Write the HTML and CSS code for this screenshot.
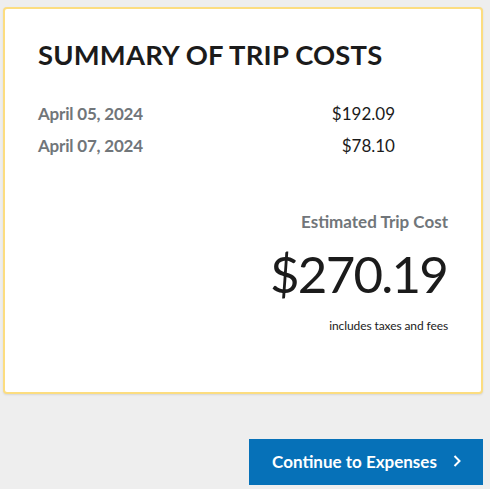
FILE: index.html
```html
<!DOCTYPE html>
<html>
<head>
<meta charset="utf-8">
<link rel="stylesheet" href="styles.css">
</head>
<body>
<div class="page">
  <section class="card">
    <h1 class="title">SUMMARY OF TRIP COSTS</h1>
    <div class="rows">
      <div class="row"><span class="date">April 05, 2024</span><span class="amt">$192.09</span></div>
      <div class="row"><span class="date">April 07, 2024</span><span class="amt">$78.10</span></div>
    </div>
    <div class="total">
      <div class="total-label">Estimated Trip Cost</div>
      <div class="total-value">$270.19</div>
      <div class="total-note">includes taxes and fees</div>
    </div>
  </section>
  <div class="actions">
    <button class="btn">Continue to Expenses
      <svg class="chev" width="10" height="14" viewBox="0 0 10 14"><path d="M2.5 2 L7.5 7 L2.5 12" fill="none" stroke="#fff" stroke-width="2"/></svg>
    </button>
  </div>
</div>
</body>
</html>
```
FILE: styles.css
```css
html, body { margin: 0; padding: 0; }
body { background: #eeeeee; font-family: Lato, "Open Sans", sans-serif; color: #1b1b1b; }
.page { padding: 7px 7px 0 3px; }
.card {
  background: #fff;
  border: 2px solid #fcdd80;
  border-radius: 4px;
  height: 383px;
  padding: 0 33px 0 33px;
  box-shadow: 0 1px 2px rgba(0,0,0,0.1);
}
.title { margin: 28px 0 0 0; font-size: 27.4px; font-weight: 700; letter-spacing: 0.2px; line-height: 36px; color: #1b1b1b; }
.rows { margin-top: 25px; width: 357px; }
.row { display: flex; justify-content: space-between; font-size: 17px; line-height: 32px; }
.date { font-weight: 700; color: #71767a; letter-spacing: -0.2px; }
.amt { color: #1b1b1b; }
.total { margin-top: 48px; text-align: right; }
.total-label { font-size: 17px; font-weight: 700; color: #71767a; line-height: 24px; }
.total-value { font-size: 51px; font-weight: 400; line-height: 60px; margin-top: 10px; color: #1b1b1b; letter-spacing: -1.8px; margin-right: 1px; }
.total-note { font-size: 12px; line-height: 20px; margin-top: 12px; color: #1b1b1b; letter-spacing: -0.1px; }
.actions { display: flex; justify-content: flex-end; margin-top: 45px; }
.btn {
  width: 234px; height: 46px;
  background: #0671b8; color: #fff; border: 0; border-radius: 0;
  font-family: inherit; font-size: 17px; font-weight: 700;
  display: flex; align-items: center; justify-content: center; gap: 15px;
  padding: 0 0 2px 2px;
}
.chev { display: block; }
```
